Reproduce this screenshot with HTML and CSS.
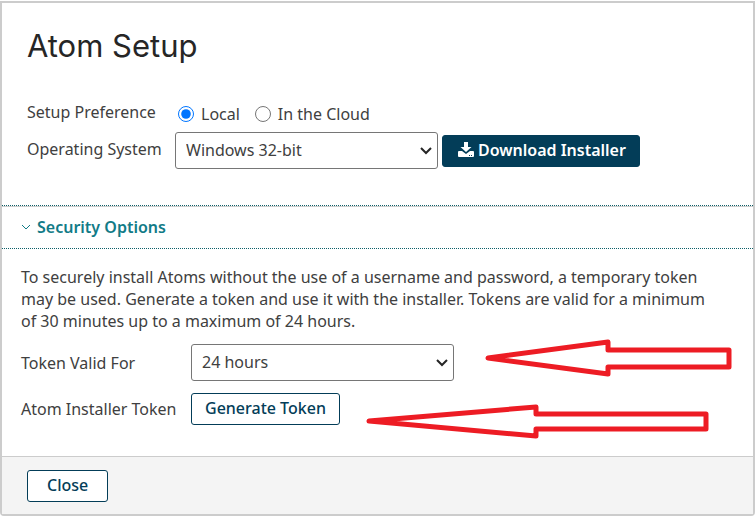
FILE: index.html
```html
<!DOCTYPE html>
<html lang="en">
<head>
    <meta charset="UTF-8">
    <meta name="viewport" content="width=device-width, initial-scale=1.0">
    <title>Atom Setup</title>
    <link rel="stylesheet" href="styles.css">
</head>
<body>
    <div class="dialog">
        <form class="setup" id="setupForm">
            <h1>Atom Setup</h1>
            <div class="setup-row preference-row" role="radiogroup" aria-labelledby="preference-label">
                <span class="row-label" id="preference-label">Setup Preference</span>
                <div class="radio-group">
                    <label class="radio"><input type="radio" name="preference" value="local" checked>Local</label>
                    <label class="radio"><input type="radio" name="preference" value="cloud">In the Cloud</label>
                </div>
            </div>
            <div class="setup-row">
                <label class="row-label" for="os">Operating System</label>
                <div class="field">
                    <span class="select-wrap">
                        <select id="os" name="os">
                            <option>Windows 32-bit</option>
                            <option>Windows 64-bit</option>
                            <option>Linux</option>
                        </select>
                        <svg class="select-arrow" viewBox="0 0 12 8" aria-hidden="true"><path d="M1 1l5 5 5-5"/></svg>
                    </span>
                    <button type="button" class="btn btn-primary">
                        <svg class="download-icon" viewBox="0 0 16 16" aria-hidden="true">
                            <path d="M6 0h4v5h3.500L8 10 2.500 5H6z"/>
                            <path d="M1 9h3l4 3 4-3h3a1 1 0 0 1 1 1v4a1 1 0 0 1-1 1H1a1 1 0 0 1-1-1v-4a1 1 0 0 1 1-1zm10 4v1h1v-1zm2 0v1h1v-1z" fill-rule="evenodd"/>
                        </svg>
                        Download Installer
                    </button>
                </div>
            </div>
        </form>

        <button type="button" class="section-header" aria-expanded="true" aria-controls="security">
            <svg class="chevron" viewBox="0 0 10 6" aria-hidden="true"><path d="M1 1l4 4 4-4"/></svg>
            Security Options
        </button>
        <div class="security" id="security">
            <p>To securely install Atoms without the use of a username and password, a temporary token may be used. Generate a token and use it with the installer. Tokens are valid for a minimum of 30 minutes up to a maximum of 24 hours.</p>
            <div class="token-row">
                <label class="row-label" for="validity">Token Valid For</label>
                <span class="select-wrap">
                    <select id="validity" name="validity">
                        <option>24 hours</option>
                        <option>12 hours</option>
                        <option>30 minutes</option>
                    </select>
                    <svg class="select-arrow" viewBox="0 0 12 8" aria-hidden="true"><path d="M1 1l5 5 5-5"/></svg>
                </span>
            </div>
            <div class="token-row">
                <label class="row-label" for="generate">Atom Installer Token</label>
                <button type="button" id="generate" class="btn">Generate Token</button>
            </div>
            <svg class="arrow arrow-validity" viewBox="0 0 248 38" aria-hidden="true">
                <path d="M4 19L124 3V11H245V28H124V35z"/>
            </svg>
            <svg class="arrow arrow-generate" viewBox="0 0 344 36" aria-hidden="true">
                <path d="M4 18L171 4V11H341V26H171V33z"/>
            </svg>
        </div>

        <div class="dialog-footer">
            <button type="button" class="btn">Close</button>
        </div>
    </div>
</body>
</html>
```

FILE: styles.css
```css
:root {
    --navy: #033d58;
    --teal: #127b87;
    --text: #404040;
    --border: #cccccc;
    --dots: #0d5f68;
    --arrow: #ed1c24;
}

* {
    margin: 0;
    padding: 0;
    box-sizing: border-box;
}

body {
    min-height: 100vh;
    display: flex;
    padding-top: 1px;
    background: #fff;
    color: var(--text);
    font-family: "Noto Sans", "Open Sans", sans-serif;
    font-size: 16px;
    line-height: 22px;
}

.dialog {
    flex: 1;
    display: flex;
    flex-direction: column;
    border: 2px solid var(--border);
    border-radius: 0 0 4px 4px;
}

.setup {
    padding: 24px 25px 36px;
}

h1 {
    margin-bottom: 36px;
    color: #262626;
    font-family: Inter, sans-serif;
    font-size: 31px;
    font-weight: 400;
    line-height: 38px;
}

.setup-row {
    display: grid;
    grid-template-columns: 148px 1fr;
}

.preference-row {
    margin-bottom: 7px;
}

.setup-row label.row-label {
    padding-top: 6px;
}

.radio-group {
    display: flex;
    gap: 15px;
    padding: 2px 3px 0;
}

.radio {
    display: flex;
    align-items: center;
    gap: 7px;
}

.radio input {
    width: 16px;
    height: 16px;
}

.field {
    display: flex;
    align-items: center;
    gap: 4px;
}

.select-wrap {
    position: relative;
    display: block;
}

select {
    display: block;
    width: 263px;
    height: 37px;
    padding: 0 28px 2px 10px;
    border: 1px solid #767676;
    border-radius: 3px;
    background: #fff;
    color: var(--text);
    font: inherit;
    appearance: none;
}

.select-arrow {
    position: absolute;
    top: 15px;
    right: 6px;
    width: 12px;
    height: 8px;
    fill: none;
    stroke: #262626;
    stroke-width: 2;
    pointer-events: none;
}

.btn {
    display: inline-flex;
    align-items: center;
    height: 32px;
    padding: 0 13px 2px;
    border: 1px solid var(--navy);
    border-radius: 3px;
    background: #fff;
    color: var(--navy);
    font: inherit;
    font-weight: 500;
    cursor: pointer;
}

.btn-primary {
    gap: 4px;
    padding: 0 13px 2px 15px;
    background: var(--navy);
    color: #fff;
    font-weight: 600;
}

.download-icon {
    width: 16px;
    height: 16px;
    fill: #fff;
}

.section-header {
    display: flex;
    align-items: center;
    gap: 6px;
    height: 44px;
    padding: 0 19px;
    border: 0;
    border-top: 1px dotted var(--dots);
    border-bottom: 1px dotted var(--dots);
    box-shadow: inset 0 1px var(--border);
    background: #fff;
    color: var(--teal);
    font: inherit;
    font-weight: 600;
    cursor: pointer;
}

.chevron {
    width: 10px;
    height: 6px;
    fill: none;
    stroke: var(--teal);
}

.security {
    position: relative;
    flex: 1;
    padding: 17px 19px 31px;
}

.security p {
    margin-right: 16px;
    margin-bottom: 12px;
}

.token-row {
    display: grid;
    grid-template-columns: 170px 1fr;
    align-items: center;
    justify-items: start;
    margin-bottom: 12px;
}

.token-row:last-of-type {
    margin-bottom: 0;
}

/* Pointers drawn over the panel */
.arrow {
    position: absolute;
    fill: none;
    stroke: var(--arrow);
    stroke-width: 5;
    stroke-linejoin: round;
    pointer-events: none;
}

.arrow-validity {
    top: 90px;
    right: 21px;
    width: 248px;
    height: 38px;
}

.arrow-generate {
    top: 154px;
    right: 44px;
    width: 344px;
    height: 36px;
}

.dialog-footer {
    padding: 13px 25px 12px;
    border-top: 1px solid var(--border);
    background: #f4f4f4;
}

.dialog-footer .btn {
    padding: 0 19px 2px;
}
```
